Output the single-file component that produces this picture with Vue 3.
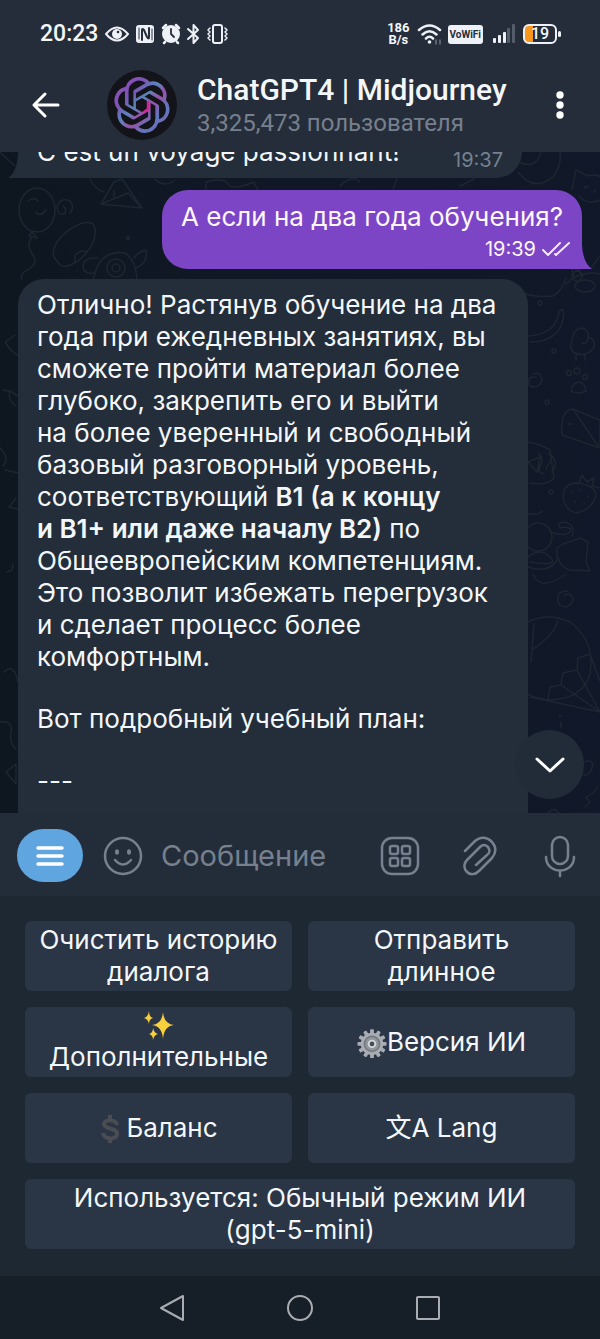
<script setup>
import { ref } from 'vue'

const draft = ref('')

const planLines = [
  [{ t: 'Отлично! Растянув обучение на два' }],
  [{ t: 'года при ежедневных занятиях, вы' }],
  [{ t: 'сможете пройти материал более' }],
  [{ t: 'глубоко, закрепить его и выйти' }],
  [{ t: 'на более уверенный и свободный' }],
  [{ t: 'базовый разговорный уровень,' }],
  [{ t: 'соответствующий ' }, { t: 'B1 (а к концу', b: true }],
  [{ t: 'и B1+ или даже началу B2)', b: true }, { t: ' по' }],
  [{ t: 'Общеевропейским компетенциям.' }],
  [{ t: 'Это позволит избежать перегрузок' }],
  [{ t: 'и сделает процесс более' }],
  [{ t: 'комфортным.' }]
]

const teeth = Array.from({ length: 12 }, (_, i) => i * 30)
</script>

<template>
  <div class="screen">
    <header class="top">
      <div class="status">
        <span class="clock">20:23</span>
        <svg class="left-icons" width="126" height="24" viewBox="0 0 126 24" fill="none" stroke="#eef1f6" stroke-width="2" stroke-linecap="round" stroke-linejoin="round">
          <path d="M2 12Q13-1 24 12Q13 25 2 12Z" />
          <circle cx="13" cy="12" r="5" fill="#eef1f6" stroke="none" />
          <circle cx="14" cy="10" r="1.3" fill="#262d3a" stroke="none" />
          <rect x="32" y="3" width="18" height="18" rx="3" fill="#eef1f6" stroke="none" />
          <path d="M38 18V8Q38 6 40 8L43 15Q45 18 45 15V6" stroke="#262d3a" stroke-width="2" />
          <path d="M35 6V17M48 7V18" stroke="#262d3a" stroke-width="1" />
          <circle cx="67" cy="12" r="9" fill="#eef1f6" stroke="none" />
          <path d="M59 6L62 3M75 6L72 3M61 20L60 21M73 20L74 21" stroke-width="2.5" />
          <path d="M67 7V12L70 15" stroke="#262d3a" stroke-width="1.8" />
          <path d="M84 7L94 16L89.500 21V3L94 8L84 17" stroke-width="2" />
          <rect x="109" y="3" width="9" height="18" rx="2" />
          <path d="M106 6L104 8L106 10L104 12L106 14L104 16L106 18M121 6L123 8L121 10L123 12L121 14L123 16L121 18" stroke-width="1.500" />
        </svg>
        <span class="rate"><span>186</span><span>B/s</span></span>
        <svg class="wifi" width="26" height="22" viewBox="0 0 26 22" fill="none" stroke="#eef1f6" stroke-width="2.500" stroke-linecap="round">
          <path d="M2 7Q12.500-2 23 7M5.500 11.500Q12.500 5 19.500 11.500M9 15.500Q12.500 12 16 15.500" />
          <circle cx="12.500" cy="19" r="1.800" fill="#eef1f6" stroke="none" />
          <path d="M19 17V21M23 17V21" stroke="#6d7582" stroke-width="1.500" />
        </svg>
        <span class="vowifi">VoWiFi</span>
        <svg class="signal" width="24" height="20" viewBox="0 0 24 20">
          <rect x="1" y="14" width="3" height="5" rx="1" fill="#eef1f6" />
          <rect x="6" y="11" width="3" height="8" rx="1" fill="#eef1f6" />
          <rect x="11" y="8" width="3" height="11" rx="1" fill="#eef1f6" />
          <rect x="15" y="4" width="3" height="15" rx="1" fill="#555d6b" />
          <rect x="20" y="0" width="3" height="19" rx="1" fill="#555d6b" />
        </svg>
        <span class="battery">19</span>
      </div>
      <div class="appbar">
        <button class="bare back" aria-label="Назад">
          <svg width="30" height="28" viewBox="0 0 30 28" fill="none" stroke="#fff" stroke-width="3" stroke-linecap="round" stroke-linejoin="round">
            <path d="M27 14H3M14 3L3 14L14 25" />
          </svg>
        </button>
        <svg class="avatar" width="70" height="70" viewBox="0 0 70 70">
          <defs>
            <linearGradient id="neon" x1="0" y1="0" x2="1" y2="1">
              <stop offset="0" stop-color="#9a4bb8" />
              <stop offset=".3" stop-color="#7a55b5" />
              <stop offset=".45" stop-color="#5a86b8" />
              <stop offset=".58" stop-color="#9a4fa8" />
              <stop offset=".75" stop-color="#5f78bd" />
              <stop offset="1" stop-color="#8a56bd" />
            </linearGradient>
          </defs>
          <circle cx="35" cy="35" r="35" fill="#13141a" />
          <g transform="translate(7 7) scale(2.330)">
            <path fill="url(#neon)" d="M22.2819 9.8211a5.9847 5.9847 0 0 0-.5157-4.9108 6.0462 6.0462 0 0 0-6.5098-2.9A6.0651 6.0651 0 0 0 4.9807 4.1818a5.9847 5.9847 0 0 0-3.9977 2.9 6.0462 6.0462 0 0 0 .7427 7.0966 5.98 5.98 0 0 0 .511 4.9107 6.051 6.051 0 0 0 6.5146 2.9001A5.9847 5.9847 0 0 0 13.2599 24a6.0557 6.0557 0 0 0 5.7718-4.2058 5.9894 5.9894 0 0 0 3.9977-2.9001 6.0557 6.0557 0 0 0-.7475-7.0729zm-9.022 12.6081a4.4755 4.4755 0 0 1-2.8764-1.0408l.1419-.0804 4.7783-2.7582a.7948.7948 0 0 0 .3927-.6813v-6.7369l2.02 1.1686a.071.071 0 0 1 .038.052v5.5826a4.504 4.504 0 0 1-4.4945 4.4944zm-9.6607-4.1254a4.4708 4.4708 0 0 1-.5346-3.0137l.142.0852 4.783 2.7582a.7712.7712 0 0 0 .7806 0l5.8428-3.3685v2.3324a.0804.0804 0 0 1-.0332.0615L9.74 19.9502a4.4992 4.4992 0 0 1-6.1408-1.6464zM2.3408 7.8956a4.485 4.485 0 0 1 2.3655-1.9728V11.6a.7664.7664 0 0 0 .3879.6765l5.8144 3.3543-2.0201 1.1685a.0757.0757 0 0 1-.071 0l-4.8303-2.7865A4.504 4.504 0 0 1 2.3408 7.8956zm16.5963 3.8558L13.1038 8.364 15.1192 7.2a.0757.0757 0 0 1 .071 0l4.8303 2.7913a4.4944 4.4944 0 0 1-.6765 8.1042v-5.6772a.79.79 0 0 0-.407-.667zm2.0107-3.0231l-.142-.0852-4.7735-2.7818a.7759.7759 0 0 0-.7854 0L9.409 9.2297V6.8974a.0662.0662 0 0 1 .0284-.0615l4.8303-2.7866a4.4992 4.4992 0 0 1 6.6802 4.66zM8.3065 12.863l-2.02-1.1638a.0804.0804 0 0 1-.038-.0567V6.0742a4.4992 4.4992 0 0 1 7.3757-3.4537l-.142.0805L8.704 5.459a.7948.7948 0 0 0-.3927.6813zm1.0976-2.3654l2.602-1.4998 2.6069 1.4998v2.9994l-2.5974 1.4997-2.6067-1.4997Z" />
          </g>
          <path d="M41 31V39L37 42" fill="none" stroke="#d3248f" stroke-width="2.500" />
        </svg>
        <div class="who">
          <h1>ChatGPT4 | Midjourney</h1>
          <p>3,325,473 пользователя</p>
        </div>
        <button class="bare more" aria-label="Ещё">
          <svg width="10" height="30" viewBox="0 0 10 30" fill="#fff">
            <circle cx="5" cy="5" r="3.700" /><circle cx="5" cy="15" r="3.700" /><circle cx="5" cy="25" r="3.700" />
          </svg>
        </button>
      </div>
    </header>

    <main class="chat">
      <svg class="wallpaper" viewBox="0 0 600 661" preserveAspectRatio="xMidYMid slice" fill="none" stroke="#1d2631" stroke-width="1.500" stroke-linecap="round" stroke-linejoin="round" aria-hidden="true">
        <ellipse cx="37" cy="58" rx="18" ry="22" />
        <path d="M28 49Q34 44 38 49M36 60Q40 66 46 58M32 80L37 86L29 84ZM31 86Q26 94 33 103T24 120Q20 124 22 128M63 54Q68 58 64 62Q58 64 57 55Q60 45 70 49Q75 56 70 61M101 52L114 30L122 27L142 56ZM101 52L128 41L142 56L122 27M114 47V38M54 105C48 90 80 64 93 72C104 90 72 121 60 113ZM75 110V103Q82 97 87 100" />
        <path d="M93 130Q98 97 125 101Q136 108 137 128M98 106Q80 105 84 118Q90 124 95 120M134 106Q138 100 146 98Q148 112 136 116" />
        <circle cx="116" cy="116" r="9" /><circle cx="116" cy="116" r="4" /><circle cx="128" cy="86" r="1.500" />
        <path d="M90 27Q96 38 104 40M155 27Q164 36 174 29M206 38V30Q224 25 228 32T254 30L258 38M175 138L182 127L190 130L183 138M340 137Q346 126 356 137M370 137L378 128L390 137M430 130L440 134L452 129L450 138L456 146M393 37L397 27M460 34L474 27M340 34Q352 22 360 30" />
        <path d="M518 20Q530 36 545 30Q562 22 560 0M519 10Q536 18 541 0M572 37L576 18L588 24Q600 20 606 31M579 44Q588 54 600 48M584 36L588 34M594 40L596 38" />
        <path d="M517 138Q530 146 553 144Q562 139 566 126M566 132Q580 118 600 122M575 126L571 116L579 118L583 124M592 115L600 104M529 184Q556 182 559 160Q562 154 564 162Q561 190 530 190M572 188Q574 176 582 176Q590 178 588 185Q596 187 594 195Q586 207 573 200Q569 194 572 188ZM582 191Q588 193 588 185M576 203V208M585 203V208" />
        <ellipse cx="585" cy="134" rx="10" ry="6" /><circle cx="577" cy="124" r="5" />
        <path d="M533 222Q541 219 542 229Q538 237 530 234Q526 224 536 225M571 239Q572 232 578 230Q586 231 586 239Q578 243 571 239ZM562 283Q560 258 573 257L600 268V296ZM573 257L598 294M568 272H573M538 301Q544 306 541 312Q536 320 544 322M546 317L550 309M528 290Q540 292 550 298L554 326Q548 334 530 331M549 302Q560 309 552 320M528 310L540 305L537 320Z" />
        <circle cx="569" cy="221" r="2.500" /><circle cx="577" cy="219" r="3" /><circle cx="585" cy="225" r="2.500" /><circle cx="540" cy="151" r="2" /><circle cx="554" cy="199" r="2" /><circle cx="547" cy="250" r="2" /><circle cx="551" cy="340" r="2" />
        <path d="M564 350Q560 331 578 331Q596 334 596 343Q592 358 576 361Q568 359 564 350ZM579 331L582 323L587 330L594 326L592 334L599 336M572 340V341M580 338V339M588 344V345M575 349V350M584 351V352" />
        <circle cx="538" cy="385" r="14" />
        <path d="M528 362Q540 363 542 359M550 380Q570 386 571 377Q566 374 560 376Q557 370 565 370Q576 373 572 384M557 396L563 392L580 386L588 390L586 410L590 419L578 418Q563 421 557 404ZM528 415Q548 422 557 408M533 422Q540 440 565 423M528 405Q540 395 550 405T530 410M564 443Q573 440 573 448Q568 459 559 452Q554 439 568 439" />
        <path d="M528 470Q548 460 570 470Q596 490 590 522Q582 548 548 548Q530 545 525 540M534 471L531 510M558 469Q553 484 532 498M590 502L578 506L577 518L563 521L561 533L550 535L548 548M590 502L604 540M577 518L600 560M561 533L600 560M530 545L600 560M560 563V565M561 570V576" />
        <path d="M584 610Q596 606 591 619Q586 625 583 622M585 655L590 650L586 645Q594 642 597 635M548 661Q554 654 559 661M0 0Q6 6 15 14M15 183L5 190Q12 201 18 203M3 238L10 239Q7 248 16 254M10 239L18 244M0 296Q10 306 3 314M5 318L18 321M9 355L16 346M9 355L18 357M7 420L12 418L13 412M4 520Q14 510 18 530M0 570Q13 568 11 580T16 597M6 620L16 612V632Z" />
      </svg>

      <article class="bubble received earlier">
        <p>C'est un voyage passionnant!</p>
        <time>19:37</time>
        <svg class="tail-left" width="10" height="24" viewBox="0 0 10 24" fill="#232e3a"><path d="M10 0Q9 18 0 24H10Z" /></svg>
      </article>

      <article class="bubble sent">
        <p>А если на два года обучения?</p>
        <div class="meta">
          <time>19:39</time>
          <svg width="28" height="16" viewBox="0 0 28 16" fill="none" stroke="#f3e9ff" stroke-width="2" stroke-linecap="round" stroke-linejoin="round">
            <path d="M1 9L6 14L18 2M13 13L14 14L27 2" />
          </svg>
        </div>
        <svg class="tail-right" width="10" height="24" viewBox="0 0 10 24" fill="#7c45c5"><path d="M0 0Q1 18 10 24H0Z" /></svg>
      </article>

      <article class="bubble received plan">
        <p>
          <template v-for="(line, i) in planLines" :key="i"><template v-for="(part, j) in line" :key="j"><strong v-if="part.b">{{ part.t }}</strong><template v-else>{{ part.t }}</template></template><br /></template>
        </p>
        <p>Вот подробный учебный план:</p>
        <p>---</p>
      </article>

      <button class="bare jump" aria-label="Вниз">
        <svg width="30" height="18" viewBox="0 0 30 18" fill="none" stroke="#fff" stroke-width="3" stroke-linecap="round" stroke-linejoin="round"><path d="M2 3L15 15L28 3" /></svg>
      </button>
    </main>

    <form class="composer" @submit.prevent>
      <button type="button" class="bare menu" aria-label="Меню">
        <svg width="28" height="22" viewBox="0 0 28 22" stroke="#fff" stroke-width="3.500" stroke-linecap="round"><path d="M2 3H26M2 11H26M2 19H26" /></svg>
      </button>
      <button type="button" class="bare" aria-label="Эмодзи">
        <svg width="40" height="40" viewBox="0 0 40 40" fill="none" stroke="#76808e" stroke-width="2.500" stroke-linecap="round">
          <circle cx="20" cy="20" r="18" /><path d="M12 24Q20 33 28 24" />
          <ellipse cx="14" cy="16" rx="2" ry="2.800" fill="#76808e" stroke="none" /><ellipse cx="26" cy="16" rx="2" ry="2.800" fill="#76808e" stroke="none" />
        </svg>
      </button>
      <input v-model="draft" type="text" placeholder="Сообщение" aria-label="Сообщение" />
      <button type="button" class="bare" aria-label="Команды">
        <svg width="40" height="40" viewBox="0 0 40 40" fill="none" stroke="#76808e" stroke-width="2.500">
          <rect x="2" y="2" width="36" height="36" rx="10" />
          <rect x="10" y="10" width="8" height="8" rx="2" /><rect x="22" y="10" width="8" height="8" rx="2" /><rect x="10" y="22" width="8" height="8" rx="2" /><rect x="22" y="22" width="8" height="8" rx="2" />
        </svg>
      </button>
      <button type="button" class="bare" aria-label="Прикрепить">
        <svg width="40" height="40" viewBox="0 0 40 40" fill="none" stroke="#76808e" stroke-width="2.500" stroke-linecap="round" stroke-linejoin="round">
          <path d="M5 15L14 6C20 0 27 1 31 5C37 11 36 17 32 22L19 35C15 39 10 39 7 36C3 32 4 27 7 24L20 11C23 8 26 9 28 11C30 14 30 17 27 19L16 29" />
        </svg>
      </button>
      <button type="button" class="bare" aria-label="Голосовое сообщение">
        <svg width="40" height="44" viewBox="0 0 40 44" fill="none" stroke="#76808e" stroke-width="2.500" stroke-linecap="round">
          <rect x="12" y="3" width="16" height="27" rx="8" /><path d="M6 23C6 41 34 41 34 23M20 37V42" />
        </svg>
      </button>
    </form>

    <section class="keyboard">
      <button>Очистить историю<br />диалога</button>
      <button>Отправить<br />длинное</button>
      <button>
        <svg class="spark" width="30" height="30" viewBox="0 0 30 30" fill="#f8cf3c">
          <path d="M19 1Q20 13 30 14Q20 15 19 28Q18 15 8 14Q18 13 19 1ZM5 0Q5 6 9 7Q5 8 5 13Q4 8 0 7Q4 6 5 0ZM9 17Q10 22 14 23Q10 24 9 29Q9 24 5 23Q9 22 9 17Z" />
        </svg>
        Дополнительные
      </button>
      <button>
        <span class="inline">
          <svg width="30" height="32" viewBox="0 0 32 32">
            <g transform="translate(16 18)" fill="#a9adb3">
              <rect v-for="a in teeth" :key="a" x="-2" y="-15.500" width="4" height="7" rx="1" :transform="`rotate(${a})`" />
              <circle r="12" /><circle r="9" fill="#777b82" /><circle r="7" fill="#93979e" /><circle r="4.500" fill="#d5d8dc" /><circle r="2.500" fill="#454b55" />
            </g>
          </svg>Версия ИИ
        </span>
      </button>
      <button>
        <span class="inline dollar">
          <svg width="22" height="30" viewBox="0 0 22 30" fill="none" stroke="#4b4d52" stroke-width="4"><path d="M18 12C17 6 5 6 5 11C5 17 18 14 18 21C18 27 5 27 4 20M11 2V8M11 24V30" /></svg>Баланс
        </span>
      </button>
      <button>文A Lang</button>
      <button class="wide">Используется: Обычный режим ИИ<br />(gpt-5-mini)</button>
    </section>

    <nav class="system">
      <button class="bare" aria-label="Назад"><svg width="26" height="28" viewBox="0 0 26 28" fill="none" stroke="#a9adb2" stroke-width="2" stroke-linejoin="round"><path d="M24 2V26L2 14Z" /></svg></button>
      <button class="bare" aria-label="Домой"><svg width="28" height="28" viewBox="0 0 28 28" fill="none" stroke="#a9adb2" stroke-width="2"><circle cx="14" cy="14" r="12" /></svg></button>
      <button class="bare" aria-label="Недавние"><svg width="26" height="26" viewBox="0 0 26 26" fill="none" stroke="#a9adb2" stroke-width="2"><rect x="2" y="2" width="22" height="22" rx="1" /></svg></button>
    </nav>
  </div>
</template>

<style>
body {
  background: #161e27;
}
</style>

<style scoped>
.screen {
  display: flex;
  flex-direction: column;
  height: 100vh;
  color: #f4f7fa;
  font-family: Inter, "Noto Sans CJK SC", sans-serif;
  font-size: 26px;
  line-height: 32px;
}
h1, p {
  margin: 0;
}
svg {
  display: block;
  flex: none;
}
.bare {
  display: flex;
  align-items: center;
  justify-content: center;
  padding: 0;
  border: 0;
  background: none;
}
.top {
  position: relative;
  z-index: 1;
  background: #262d3a;
}
.status {
  display: flex;
  align-items: center;
  height: 64px;
  padding: 4px 38px 0 40px;
  box-sizing: border-box;
}
.clock {
  font: 500 23px/24px Roboto, sans-serif;
}
.left-icons {
  margin-left: 6px;
}
.rate {
  display: flex;
  flex-direction: column;
  align-items: center;
  margin-left: auto;
  font: 700 13px/12px Roboto, sans-serif;
}
.wifi {
  margin-left: 7px;
}
.vowifi {
  margin: 0 9px 0 5px;
  padding: 0 2px;
  border-radius: 3px;
  background: #eef1f6;
  color: #262d3a;
  font: 700 10px/19px Roboto, sans-serif;
}
.battery {
  position: relative;
  width: 34px;
  margin: 0 5px 0 7px;
  border: 2px solid #eef1f6;
  border-radius: 6px;
  box-sizing: border-box;
  background: linear-gradient(90deg, #f7981d 8px, transparent 8px);
  font: 500 16px/16px Roboto, sans-serif;
  text-align: center;
}
.battery::after {
  content: "";
  position: absolute;
  top: 5px;
  right: -6px;
  width: 3px;
  height: 6px;
  border-radius: 2px;
  background: #eef1f6;
}
.appbar {
  display: flex;
  align-items: center;
  height: 88px;
  padding: 0 35px 6px 31px;
  box-sizing: border-box;
}
.avatar {
  margin: 0 20px 0 46px;
}
.who {
  flex: 1;
  font-family: Roboto, sans-serif;
  white-space: nowrap;
}
.who h1 {
  font-size: 30px;
  font-weight: 500;
  line-height: 36px;
}
.who p {
  color: #76808e;
  font-size: 24px;
  line-height: 30px;
}
.chat {
  position: relative;
  display: flex;
  flex: 1 1 0;
  flex-direction: column;
  min-height: 0;
  overflow: hidden;
  background: linear-gradient(90deg, #0e1720, #101828 60%, #111829);
}
.wallpaper {
  position: absolute;
  inset: 0;
  width: 100%;
  height: 100%;
}
.bubble {
  position: relative;
  flex: none;
  padding: 10px 19px;
  border-radius: 26px;
  box-sizing: border-box;
  white-space: nowrap;
}
.received {
  width: 85%;
  margin-left: 18px;
  background: #232e3a;
}
.earlier {
  display: flex;
  justify-content: space-between;
  align-items: flex-end;
  width: 84%;
  margin-top: -26px;
  border-bottom-left-radius: 0;
}
time {
  font-size: 20px;
}
.earlier time {
  margin-bottom: -8px;
  color: #76808e;
}
.tail-left {
  position: absolute;
  bottom: 0;
  left: -10px;
}
.sent {
  align-self: flex-end;
  margin: 12px 18px 10px;
  padding: 11px 19px 4px;
  border-bottom-right-radius: 0;
  background: #7c45c5;
  color: #fdf6ff;
}
.meta {
  display: flex;
  align-items: center;
  justify-content: flex-end;
  gap: 6px;
  margin-right: -7px;
}
.tail-right {
  position: absolute;
  right: -10px;
  bottom: 0;
}
.plan {
  border-radius: 26px 26px 0 0;
}
.plan p {
  margin-bottom: 30px;
}
.plan strong {
  font-weight: 600;
}
.jump {
  position: absolute;
  right: 16px;
  bottom: 14px;
  width: 69px;
  height: 69px;
  border-radius: 50%;
  background: #222c39;
}
.composer {
  display: flex;
  align-items: center;
  height: 83px;
  padding: 2px 20px 0 17px;
  box-sizing: border-box;
  background: #232d3a;
}
.menu {
  width: 66px;
  height: 53px;
  margin-right: 20px;
  border-radius: 27px;
  background: #5fa5df;
}
.composer input {
  flex: 1;
  min-width: 0;
  margin-left: 18px;
  padding: 0;
  border: 0;
  outline: 0;
  background: none;
  color: #f4f7fa;
  font: inherit;
  font-size: 29px;
  line-height: 36px;
}
.composer input::placeholder {
  color: #76808e;
  opacity: 1;
}
.composer input ~ .bare + .bare {
  margin-left: 40px;
}
.keyboard {
  display: grid;
  grid-template-columns: 1fr 1fr;
  gap: 16px;
  padding: 25px 25px 27px;
  background: #1e2833;
}
.keyboard button {
  display: flex;
  flex-direction: column;
  align-items: center;
  justify-content: center;
  height: 70px;
  padding: 0;
  border: 0;
  border-radius: 6px;
  background: #2a3545;
  color: #f4f7fa;
  font: inherit;
  white-space: nowrap;
}
.keyboard .wide {
  grid-column: 1 / -1;
}
.inline {
  display: flex;
  align-items: center;
}
.dollar {
  gap: 5px;
}
.system {
  display: flex;
  justify-content: center;
  height: 63px;
  background: #161e27;
}
.system .bare {
  width: 128px;
}
</style>
